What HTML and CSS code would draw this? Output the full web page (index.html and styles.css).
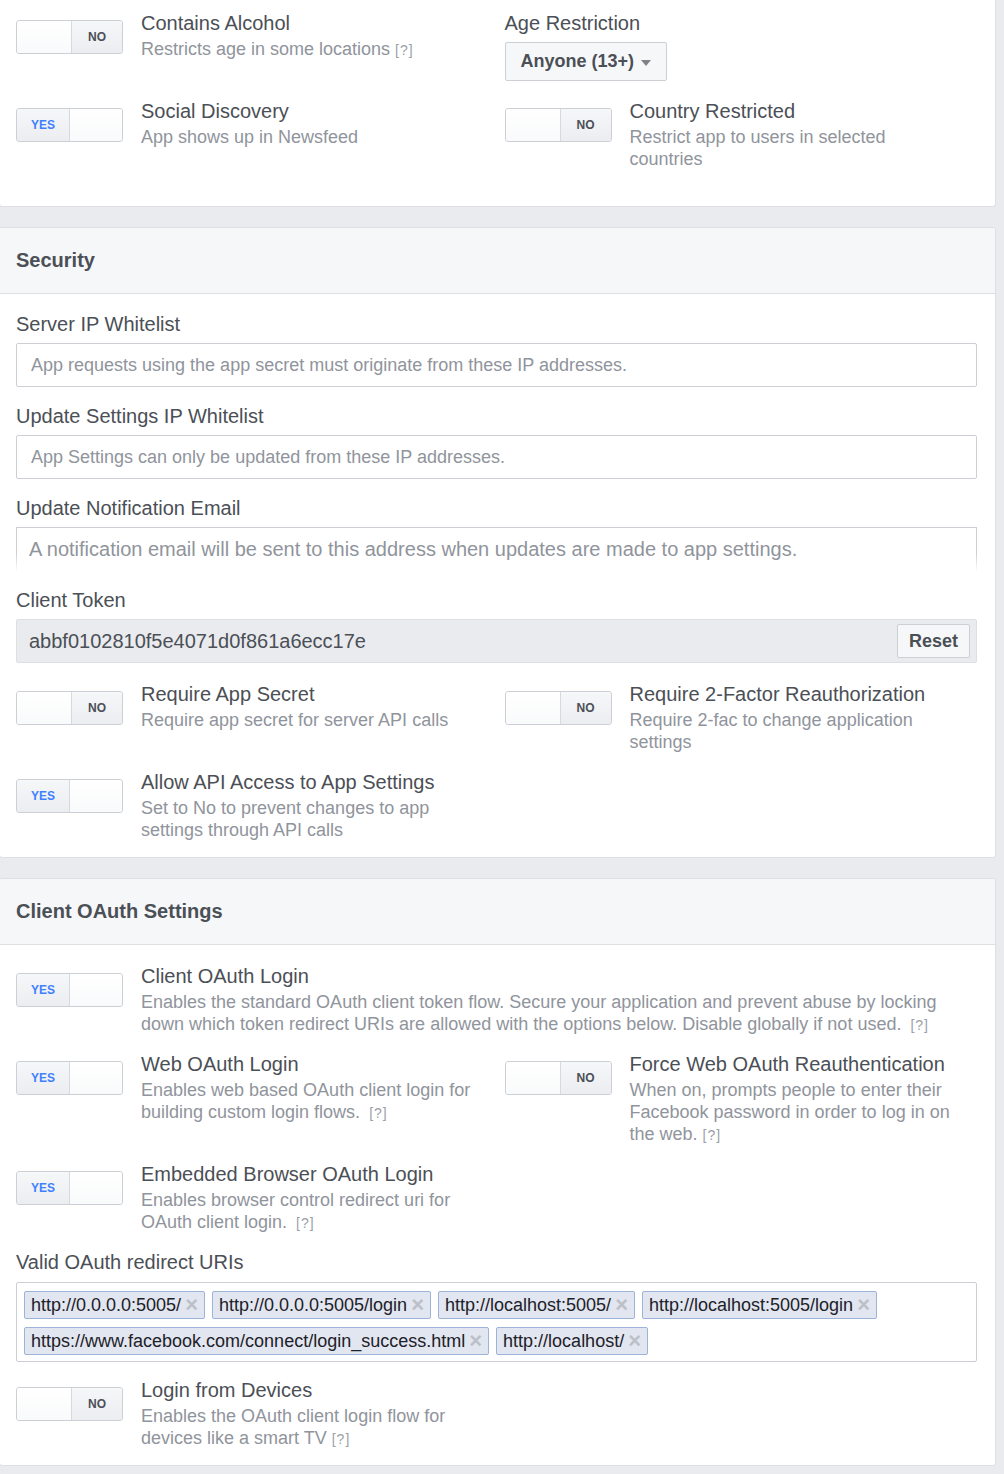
FILE: index.html
```html
<!DOCTYPE html>
<html>
<head>
<meta charset="utf-8">
<link rel="stylesheet" href="styles.css">
</head>
<body>
<div class="panel panel-top">
  <div class="body body-top">
    <div class="grid grid-top">
      <div class="setting">
        <div class="toggle off"><span class="knob"></span><span class="state">NO</span></div>
        <div class="text">
          <div class="title">Contains Alcohol</div>
          <div class="sub">Restricts age in some locations <span class="help">[?]</span></div>
        </div>
      </div>
      <div class="field">
        <div class="label">Age Restriction</div>
        <div class="select">Anyone (13+)<span class="caret"></span></div>
      </div>
      <div class="setting">
        <div class="toggle on"><span class="state">YES</span><span class="knob"></span></div>
        <div class="text">
          <div class="title">Social Discovery</div>
          <div class="sub">App shows up in Newsfeed</div>
        </div>
      </div>
      <div class="setting">
        <div class="toggle off"><span class="knob"></span><span class="state">NO</span></div>
        <div class="text">
          <div class="title">Country Restricted</div>
          <div class="sub">Restrict app to users in selected<br>countries</div>
        </div>
      </div>
    </div>
  </div>
</div>

<div class="panel">
  <div class="head">Security</div>
  <div class="body body-security">
    <div class="field">
      <div class="label">Server IP Whitelist</div>
      <div class="input">App requests using the app secret must originate from these IP addresses.</div>
    </div>
    <div class="field">
      <div class="label">Update Settings IP Whitelist</div>
      <div class="input">App Settings can only be updated from these IP addresses.</div>
    </div>
    <div class="field">
      <div class="label">Update Notification Email</div>
      <div class="input textarea">A notification email will be sent to this address when updates are made to app settings.</div>
    </div>
    <div class="field">
      <div class="label">Client Token</div>
      <div class="token">
        <span class="token-value">abbf0102810f5e4071d0f861a6ecc17e</span>
        <span class="btn">Reset</span>
      </div>
    </div>
    <div class="grid grid-security">
      <div class="setting">
        <div class="toggle off"><span class="knob"></span><span class="state">NO</span></div>
        <div class="text">
          <div class="title">Require App Secret</div>
          <div class="sub">Require app secret for server API calls</div>
        </div>
      </div>
      <div class="setting">
        <div class="toggle off"><span class="knob"></span><span class="state">NO</span></div>
        <div class="text">
          <div class="title">Require 2-Factor Reauthorization</div>
          <div class="sub">Require 2-fac to change application<br>settings</div>
        </div>
      </div>
      <div class="setting">
        <div class="toggle on"><span class="state">YES</span><span class="knob"></span></div>
        <div class="text">
          <div class="title">Allow API Access to App Settings</div>
          <div class="sub">Set to No to prevent changes to app<br>settings through API calls</div>
        </div>
      </div>
    </div>
  </div>
</div>

<div class="panel">
  <div class="head">Client OAuth Settings</div>
  <div class="body body-oauth">
    <div class="setting">
      <div class="toggle on"><span class="state">YES</span><span class="knob"></span></div>
      <div class="text">
        <div class="title">Client OAuth Login</div>
        <div class="sub">Enables the standard OAuth client token flow. Secure your application and prevent abuse by locking<br>down which token redirect URIs are allowed with the options below. Disable globally if not used. <span class="help gap">[?]</span></div>
      </div>
    </div>
    <div class="grid grid-oauth">
      <div class="setting">
        <div class="toggle on"><span class="state">YES</span><span class="knob"></span></div>
        <div class="text">
          <div class="title">Web OAuth Login</div>
          <div class="sub">Enables web based OAuth client login for<br>building custom login flows. <span class="help gap">[?]</span></div>
        </div>
      </div>
      <div class="setting">
        <div class="toggle off"><span class="knob"></span><span class="state">NO</span></div>
        <div class="text">
          <div class="title">Force Web OAuth Reauthentication</div>
          <div class="sub">When on, prompts people to enter their<br>Facebook password in order to log in on<br>the web. <span class="help">[?]</span></div>
        </div>
      </div>
      <div class="setting">
        <div class="toggle on"><span class="state">YES</span><span class="knob"></span></div>
        <div class="text">
          <div class="title">Embedded Browser OAuth Login</div>
          <div class="sub">Enables browser control redirect uri for<br>OAuth client login. <span class="help gap">[?]</span></div>
        </div>
      </div>
    </div>
    <div class="field field-uris">
      <div class="label">Valid OAuth redirect URIs</div>
      <div class="chips">
        <span class="chip">http://0.0.0.0:5005/<span class="x">×</span></span>
        <span class="chip">http://0.0.0.0:5005/login<span class="x">×</span></span>
        <span class="chip">http://localhost:5005/<span class="x">×</span></span>
        <span class="chip">http://localhost:5005/login<span class="x">×</span></span>
        <span class="chip">https://www.facebook.com/connect/login_success.html<span class="x">×</span></span>
        <span class="chip">http://localhost/<span class="x">×</span></span>
      </div>
    </div>
    <div class="setting">
      <div class="toggle off"><span class="knob"></span><span class="state">NO</span></div>
      <div class="text">
        <div class="title">Login from Devices</div>
        <div class="sub">Enables the OAuth client login flow for<br>devices like a smart TV <span class="help">[?]</span></div>
      </div>
    </div>
  </div>
</div>
</body>
</html>
```

FILE: styles.css
```css
html, body {
  margin: 0;
  padding: 0;
}
body {
  background: #e9ebee;
  font-family: "Liberation Sans", Arial, Helvetica, sans-serif;
  color: #4b4f56;
  width: 1004px;
}
.panel {
  background: #fff;
  border: 1px solid #dddfe2;
  border-radius: 3px;
  margin: 0 8px 20px -1px;
}
.panel-top {
  border-top: none;
  border-radius: 0 0 3px 3px;
}
.head {
  height: 66px;
  box-sizing: border-box;
  background: #f6f7f9;
  border-bottom: 1px solid #dddfe2;
  border-radius: 3px 3px 0 0;
  padding: 0 18px 0 16px;
  display: flex;
  align-items: center;
  font-size: 20px;
  font-weight: bold;
  color: #4b4f56;
}
.body {
  padding: 0 18px 15px 16px;
  display: flex;
  flex-direction: column;
}
.body-top {
  padding-top: 11px;
  padding-bottom: 36px;
}
.body-security {
  padding-top: 18px;
  padding-bottom: 16px;
  gap: 17px;
}
.body-oauth {
  padding-top: 19px;
  gap: 16px;
}
.grid {
  display: grid;
  grid-template-columns: 1fr 1fr;
  column-gap: 16px;
  row-gap: 17px;
}
.grid-top {
  row-gap: 18px;
}
.grid-security {
  margin-top: 2px;
}
.grid-oauth {
  row-gap: 16px;
}
.setting {
  display: flex;
  align-items: flex-start;
  gap: 18px;
}
.toggle {
  flex: none;
  width: 107px;
  height: 34px;
  margin-top: 9px;
  box-sizing: border-box;
  border: 1px solid #ccd0d5;
  border-radius: 3px;
  background: #edeff2;
  display: flex;
  overflow: hidden;
}
.toggle .knob {
  width: 54px;
  background: linear-gradient(#fff, #f9fafb);
}
.toggle.off .knob {
  border-right: 1px solid #d6d9dd;
}
.toggle.on .knob {
  border-left: 1px solid #d6d9dd;
  width: 52px;
}
.toggle .state {
  flex: 1;
  display: flex;
  align-items: center;
  justify-content: center;
  font-size: 12px;
  font-weight: bold;
  color: #4b4f56;
  background: linear-gradient(#f6f7f9, #ebedf0);
}
.toggle.on .state {
  color: #4080ff;
}
.text {
  min-width: 0;
}
.title {
  font-size: 20px;
  line-height: 24px;
  color: #4b4f56;
}
.sub {
  margin-top: 3px;
  font-size: 18px;
  line-height: 22px;
  color: #90949c;
}
.help {
  font-size: 14px;
  color: #9ca0a7;
  letter-spacing: 1px;
}
.help.gap {
  margin-left: 4px;
}
.field {
  display: flex;
  flex-direction: column;
}
.label {
  font-size: 20px;
  line-height: 24px;
  color: #4b4f56;
  margin-bottom: 7px;
}
.field-uris .label {
  margin-bottom: 8px;
}
.select {
  align-self: flex-start;
  width: 162px;
  height: 39px;
  box-sizing: border-box;
  border: 1px solid #ccd0d5;
  border-radius: 2px;
  background: #f6f7f9;
  padding: 0 0 0 15px;
  display: flex;
  align-items: center;
  font-size: 18px;
  font-weight: bold;
  color: #4b4f56;
}
.caret {
  margin-left: 7px;
  margin-top: 2px;
  width: 0;
  height: 0;
  border-left: 5px solid transparent;
  border-right: 5px solid transparent;
  border-top: 6px solid #7f8389;
}
.input {
  height: 44px;
  box-sizing: border-box;
  border: 1px solid #ccd0d5;
  border-radius: 2px;
  padding: 0 14px;
  display: flex;
  align-items: center;
  font-size: 18px;
  color: #90949c;
  white-space: nowrap;
  overflow: hidden;
}
.input.textarea {
  border-bottom: none;
  border-image: linear-gradient(#ccd0d5 60%, rgba(204,208,213,0)) 1;
  padding: 9px 12px 0 12px;
  font-size: 20px;
  line-height: 24px;
  align-items: flex-start;
}
.token {
  height: 44px;
  box-sizing: border-box;
  border: 1px solid #dddfe2;
  border-radius: 2px;
  background: #e9ebee;
  padding: 0 6px 0 12px;
  display: flex;
  align-items: center;
  justify-content: space-between;
}
.token-value {
  font-size: 20px;
  color: #4b4f56;
}
.btn {
  height: 34px;
  box-sizing: border-box;
  padding: 0 11px;
  border: 1px solid #ccd0d5;
  border-radius: 2px;
  background: #f6f7f9;
  display: flex;
  align-items: center;
  font-size: 18px;
  font-weight: bold;
  color: #4b4f56;
}
.chips {
  border: 1px solid #ccd0d5;
  border-radius: 2px;
  padding: 8px 7px 6px 7px;
  display: flex;
  flex-wrap: wrap;
  gap: 8px 7px;
}
.chip {
  height: 28px;
  box-sizing: border-box;
  border: 1px solid #9cb4d8;
  border-radius: 2px;
  background: #e2e6f0;
  padding: 0 6px 0 6px;
  display: flex;
  align-items: center;
  font-size: 18px;
  color: #1d2129;
}
.chip .x {
  margin-left: 4px;
  font-size: 22px;
  line-height: 1;
  font-weight: bold;
  color: #bcc0c7;
}
```
